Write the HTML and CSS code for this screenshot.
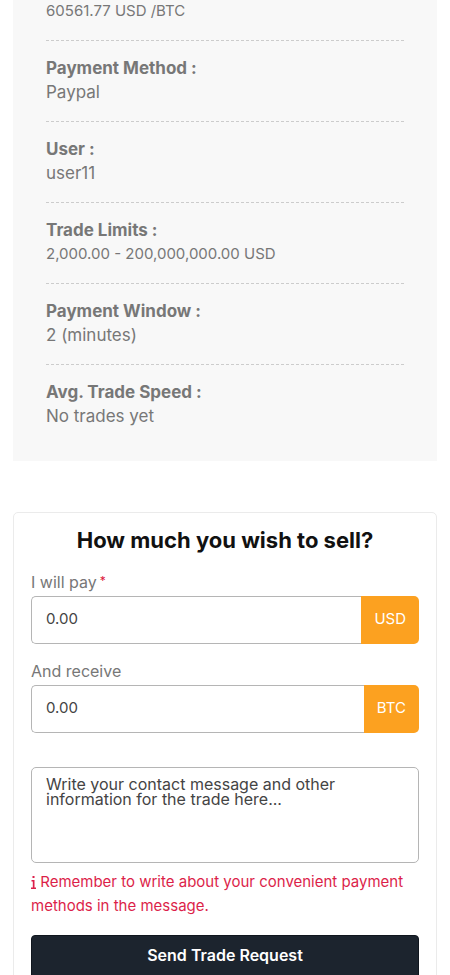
FILE: index.html
```
<!DOCTYPE html>
<html lang="en">
<head>
    <meta charset="UTF-8">
    <meta name="viewport" content="width=device-width, initial-scale=1">
    <title>Trade Request</title>
    <link rel="stylesheet" href="styles.css">
</head>
<body>
    <main class="container">
        <ul class="trade-info">
            <li><span class="figure">60561.77 USD /BTC</span></li>
            <li><strong>Payment Method :</strong><span>Paypal</span></li>
            <li><strong>User :</strong><span>user11</span></li>
            <li><strong>Trade Limits :</strong><span class="figure">2,000.00 - 200,000,000.00 USD</span></li>
            <li><strong>Payment Window :</strong><span>2 (minutes)</span></li>
            <li><strong>Avg. Trade Speed :</strong><span>No trades yet</span></li>
        </ul>

        <form class="trade-form">
            <h2>How much you wish to sell?</h2>
            <div class="form-group">
                <label for="amount">I will pay<sup class="required">*</sup></label>
                <div class="input-group">
                    <input type="text" id="amount" placeholder="0.00" required>
                    <span class="currency">USD</span>
                </div>
            </div>
            <div class="form-group">
                <label for="receive">And receive</label>
                <div class="input-group">
                    <input type="text" id="receive" placeholder="0.00">
                    <span class="currency">BTC</span>
                </div>
            </div>
            <textarea class="message" id="message" aria-label="Message" placeholder="Write your contact message and other information for the trade here..."></textarea>
            <p class="note">
                <svg class="info-icon" width="5" height="13" viewBox="0 0 5 13" aria-hidden="true">
                    <rect x="1.5" y="0" width="2" height="2"/>
                    <path d="M.5 4h3v7.5H5V13H0v-1.5h1.8v-6H.5z"/>
                </svg>
                Remember to write about your convenient payment methods in the message.
            </p>
            <button type="submit" class="btn">Send Trade Request</button>
        </form>
    </main>
</body>
</html>
```
FILE: styles.css
```
* { box-sizing: border-box; }
body { margin: 0; background: #fff; color: #777; font-family: Inter, "Liberation Sans", sans-serif; font-size: 16px; line-height: 24px; }
.container { padding: 0 13px; }

.trade-info { list-style: none; margin: 0 0 51px; padding: 0 33px 33px; background: #f8f8f8; font-size: 17px; }
.trade-info li { display: flex; flex-direction: column; padding: 15px 0 17px; border-bottom: 1px dashed #ccc; }
.trade-info li:first-child { padding-top: 0; margin-top: -1px; }
.trade-info li:last-child { padding-bottom: 0; border-bottom: none; }
.trade-info strong { font-weight: 700; }
.trade-info .figure { font-size: 15px; }

.trade-form { display: flex; flex-direction: column; padding: 12px 17px 16px; border: 1px solid #ebebeb; border-radius: 5px; }
h2 { margin: 0 0 15px; color: #111; font-size: 22px; line-height: 30px; font-weight: 700; text-align: center; }
.form-group { margin-bottom: 15px; }
.form-group label { display: block; height: 26px; }
.required { margin-left: 3px; color: #dc143c; font-size: 12px; line-height: 1; vertical-align: 3px; }
.input-group { display: flex; height: 48px; }
.input-group input {
    flex: 1; min-width: 0; padding: 0 14px 2px; border: 1px solid #b5b5b5; border-right: none;
    border-radius: 5px 0 0 5px; background: #fff; color: #444; font: inherit; font-size: 15px;
}
.currency { display: flex; align-items: center; padding: 0 13px 2px; background: #fca120; color: #fff; border-radius: 0 5px 5px 0; font-size: 15px; }
input::placeholder, textarea::placeholder { color: #444; opacity: 1; }
.message {
    height: 96px; margin-top: 19px; padding: 9px 14px; border: 1px solid #b5b5b5; border-radius: 5px;
    color: #444; font: inherit; line-height: 15px; resize: none;
}
.note { margin: 7px 0 17px; color: #dc1f4a; font-size: 15px; line-height: 24px; }
.info-icon { fill: currentColor; vertical-align: -2px; }
.btn { padding: 7px 16px 13px; border: 1px solid #10161e; border-radius: 4px; background: #1c242e; color: #fff; font: inherit; font-weight: 600; cursor: pointer; }
```
